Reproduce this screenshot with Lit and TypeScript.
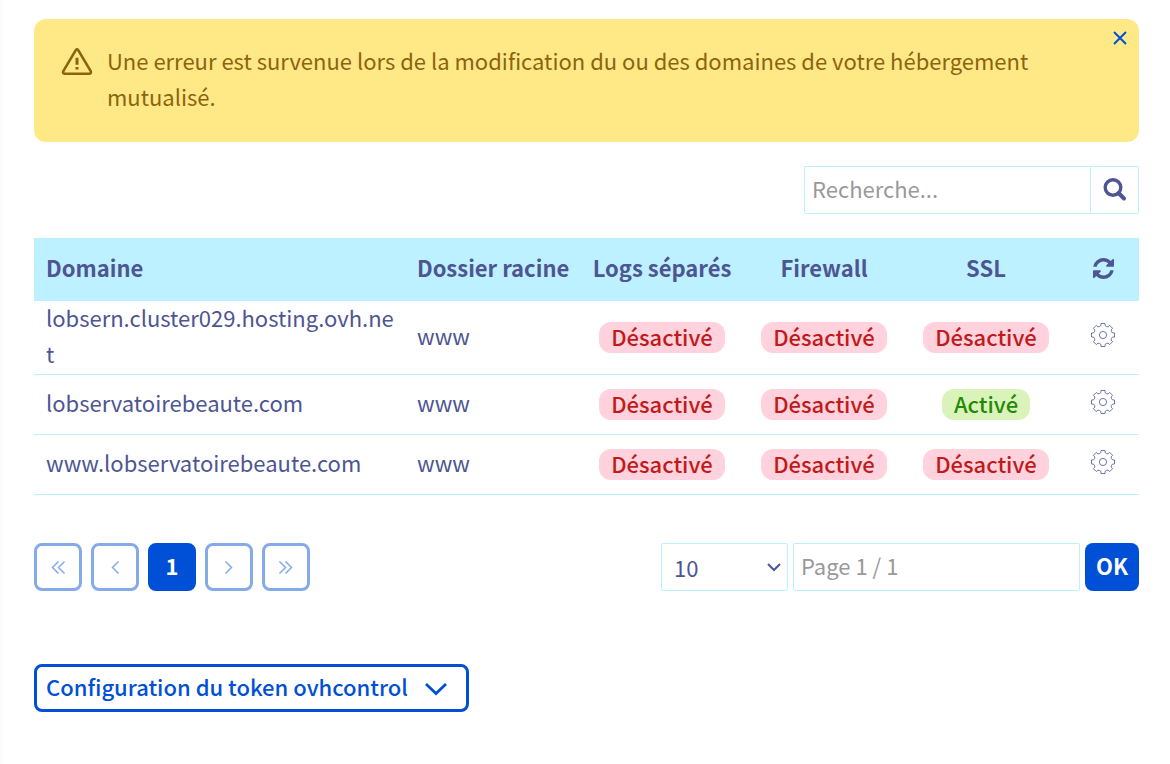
import { LitElement, html, css, svg } from "lit";
import { customElement, state } from "lit/decorators.js";

interface Domain {
  name: string;
  root: string;
  flags: boolean[];
}

const DOMAINS: Domain[] = [
  { name: "lobsern.cluster029.hosting.ovh.net", root: "www", flags: [false, false, false] },
  { name: "lobservatoirebeaute.com", root: "www", flags: [false, false, true] },
  { name: "www.lobservatoirebeaute.com", root: "www", flags: [false, false, false] },
];

/* Outline of an eight-toothed gear on a 26px canvas. */
const gearPath = (() => {
  const teeth = 8;
  const point = (radius: number, degrees: number) => {
    const a = (degrees * Math.PI) / 180;
    return `${(13 + radius * Math.sin(a)).toFixed(2)} ${(13 - radius * Math.cos(a)).toFixed(2)}`;
  };
  let d = "";
  for (let i = 0; i < teeth; i++) {
    const c = (i * 360) / teeth;
    d += `${i ? "L" : "M"}${point(9.6, c - 13)}L${point(11.7, c - 10)}`;
    d += `L${point(11.7, c + 10)}L${point(9.6, c + 13)}`;
    d += `Q${point(8.8, c + 22.5)} ${point(9.6, c + 32)}`;
  }
  return d + "Z";
})();

const stroke = (size: number, width: number, d: string) => html`
  <svg width=${size} height=${size} viewBox="0 0 ${size} ${size}" fill="none"
    stroke="currentColor" stroke-width=${width} aria-hidden="true">${svg`<path d=${d} />`}</svg>`;

const gearIcon = html`
  <svg width="26" height="26" viewBox="0 0 26 26" fill="none" stroke="currentColor"
    stroke-width="0.8" stroke-linejoin="round" aria-hidden="true">
    <path d=${gearPath} /><circle cx="13" cy="13" r="3.6" />
  </svg>`;

const refreshIcon = html`
  <svg width="21" height="21" viewBox="0 0 1536 1536" fill="currentColor" aria-hidden="true">
    <path d="M1511 928q0 5-1 7-64 268-268 434.500T764 1536q-146 0-282.500-55T238 1324l-129 129q-19 19-45 19t-45-19-19-45V960q0-26 19-45t45-19h448q26 0 45 19t19 45-19 45l-137 137q71 66 161 102t187 36q134 0 250-65t186-179q11-17 53-117 8-23 30-23h192q13 0 22.500 9.500t9.500 22.500zm25-800v448q0 26-19 45t-45 19h-448q-26 0-45-19t-19-45 19-45l138-138Q969 256 768 256q-134 0-250 65T332 500q-11 17-53 117-8 23-30 23H50q-13 0-22.500-9.500T18 608v-7q65-268 270-434.500T768 0q146 0 284 55.500T1297 212l130-129q19-19 45-19t45 19 19 45z" />
  </svg>`;

@customElement("app-root")
export class AppRoot extends LitElement {
  @state() private alertOpen = true;

  static styles = css`
    :host {
      display: block;
      box-sizing: border-box;
      min-height: 100vh;
      padding: 19px 31px 24px 31px;
      border-left: 3px solid #fcfcfd;
      background: #fff;
      color: #4d5592;
      font: 400 22px/36px "Noto Sans CJK SC", "Noto Sans", sans-serif;
    }
    *, *::before, *::after { box-sizing: border-box; }
    svg { display: block; flex: none; }
    button, input, select { font: inherit; color: inherit; margin: 0; }
    button {
      display: flex;
      align-items: center;
      justify-content: center;
      padding: 0;
      border: 0;
      background: none;
      cursor: pointer;
    }
    /* The font sits low in its line box; trimming the top centres the letters. */
    .text { display: block; margin-top: -4px; }
    .alert {
      display: flex;
      align-items: flex-start;
      padding: 23px 12px 28px 27px;
      border-radius: 12px;
      background: #ffe987;
      color: #8d6310;
      position: relative;
    }
    .alert p { flex: 1; margin: 0 84px 0 14px; }
    .alert .warning { margin-top: 4px; }
    .close { position: absolute; top: 12px; right: 12px; color: #0050d7; }
    .search {
      display: flex;
      width: 335px;
      height: 48px;
      margin: 24px 0 24px auto;
    }
    .field {
      min-width: 0;
      height: 48px;
      padding: 0 7px 4px;
      border: 1px solid #bef1ff;
      border-radius: 2px;
      background: #fff;
      outline: 0;
    }
    .field::placeholder { color: #999; opacity: 1; }
    .search .field { flex: 1; border-right: 0; border-radius: 2px 0 0 2px; }
    .search button { width: 49px; border: 1px solid #bef1ff; border-radius: 0 2px 2px 0; }
    table { width: 100%; border-collapse: separate; border-spacing: 0; table-layout: fixed; }
    .root { width: 176px; }
    .flag { width: 162px; }
    .tools { width: 72px; }
    th {
      height: 63px;
      padding: 0 0 2px;
      background: #bef1ff;
      font-weight: 700;
      text-align: center;
      white-space: nowrap;
    }
    td {
      height: 60px;
      padding: 0 0 1px;
      border-bottom: 1px solid #bef1ff;
      text-align: center;
      overflow-wrap: anywhere;
    }
    tbody tr:first-child td { height: 74px; }
    .start { padding-left: 12px; padding-right: 8px; text-align: left; }
    td button, th button { margin: 0 auto; }
    td button { margin-bottom: 4px; }
    .badge {
      display: block;
      width: fit-content;
      height: 31px;
      margin: 0 auto;
      padding: 0 12px;
      border-radius: 12px;
      background: #ffd2dd;
      color: #bf1b1b;
      font-weight: 500;
      line-height: 29px;
    }
    .badge.on { background: #daf3bb; color: #228a05; }
    .bar {
      display: flex;
      flex-wrap: wrap;
      justify-content: space-between;
      gap: 12px;
      margin: 48px 0 73px;
    }
    .pages { display: flex; gap: 9px; }
    .pages button {
      width: 48px;
      height: 48px;
      border: 3px solid #85aaea;
      border-radius: 8px;
      color: #85aaea;
    }
    .pages .current { border-color: #0050d7; background: #0050d7; color: #fff; font-weight: 700; }
    .jump { display: flex; gap: 5px; }
    .size { display: grid; width: 127px; align-items: center; }
    .size > * { grid-area: 1 / 1; }
    .size select { width: 100%; padding: 0 12px; appearance: none; }
    .size svg { justify-self: end; margin-right: 6px; pointer-events: none; }
    .jump input { width: 287px; }
    .ok {
      width: 54px;
      height: 48px;
      border-radius: 8px;
      background: #0050d7;
      color: #fff;
      font-weight: 700;
    }
    .token {
      height: 48px;
      padding: 0 17px 0 9px;
      gap: 15px;
      border: 3px solid #0050d7;
      border-radius: 8px;
      color: #0050d7;
      font-weight: 500;
    }
  `;

  private renderRow(d: Domain) {
    return html`
      <tr>
        <td class="start"><span class="text">${d.name}</span></td>
        <td class="start"><span class="text">${d.root}</span></td>
        ${d.flags.map((on) => html`
          <td><span class="badge ${on ? "on" : ""}">${on ? "Activé" : "Désactivé"}</span></td>`)}
        <td><button aria-label="Actions pour ${d.name}">${gearIcon}</button></td>
      </tr>`;
  }

  render() {
    return html`
      ${this.alertOpen ? html`
        <div class="alert" role="alert">
          <svg class="warning" width="32" height="32" viewBox="0 0 32 32" fill="none"
            stroke="currentColor" stroke-linejoin="round" aria-hidden="true">
            <path d="M14.800 4.100Q16 2.300 17.200 4.100L29.700 25.200Q30.500 27.500 28.500 27.800H3.500Q1.500 27.500 2.300 25.200Z" stroke-width="2.600" />
            <path d="M16 11.800V18.800M16 21V23.600" stroke-width="3" />
          </svg>
          <p>Une erreur est survenue lors de la modification du ou des domaines de votre hébergement mutualisé.</p>
          <button class="close" aria-label="Fermer" @click=${() => (this.alertOpen = false)}>
            ${stroke(14, 2, "M1 1L13 13M13 1L1 13")}
          </button>
        </div>` : null}

      <form class="search" role="search" @submit=${(e: Event) => e.preventDefault()}>
        <input class="field" type="text" placeholder="Recherche..." aria-label="Recherche" />
        <button aria-label="Rechercher">
          <svg width="24" height="24" viewBox="0 0 24 24" fill="none" stroke="currentColor" aria-hidden="true">
            <circle cx="10" cy="9.500" r="7.800" stroke-width="3.400" />
            <path d="M15.500 15L21 20.500" stroke-width="4" stroke-linecap="round" />
          </svg>
        </button>
      </form>

      <table>
        <colgroup>
          <col /><col class="root" /><col class="flag" /><col class="flag" /><col class="flag" /><col class="tools" />
        </colgroup>
        <thead>
          <tr>
            <th class="start" scope="col"><span class="text">Domaine</span></th>
            <th class="start" scope="col"><span class="text">Dossier racine</span></th>
            <th scope="col"><span class="text">Logs séparés</span></th>
            <th scope="col"><span class="text">Firewall</span></th>
            <th scope="col"><span class="text">SSL</span></th>
            <th scope="col"><button aria-label="Rafraîchir">${refreshIcon}</button></th>
          </tr>
        </thead>
        <tbody>${DOMAINS.map((d) => this.renderRow(d))}</tbody>
      </table>

      <div class="bar">
        <nav class="pages" aria-label="Pagination">
          <button disabled aria-label="Première page">${stroke(16, 1.5, "M8.500 2.500L2.500 8.500L8.500 14.500M14.500 2.500L8.500 8.500L14.500 14.500")}</button>
          <button disabled aria-label="Page précédente">${stroke(16, 1.5, "M11.500 2.500L5.500 8.500L11.500 14.500")}</button>
          <button class="current" aria-current="page"><span class="text">1</span></button>
          <button disabled aria-label="Page suivante">${stroke(16, 1.5, "M4.500 2.500L10.500 8.500L4.500 14.500")}</button>
          <button disabled aria-label="Dernière page">${stroke(16, 1.5, "M1.500 2.500L7.500 8.500L1.500 14.500M7.500 2.500L13.500 8.500L7.500 14.500")}</button>
        </nav>
        <form class="jump" @submit=${(e: Event) => e.preventDefault()}>
          <div class="size">
            <select class="field" aria-label="Résultats par page">
              <option>10</option><option>25</option><option>50</option>
            </select>
            ${stroke(16, 2, "M2 5L8 11L14 5")}
          </div>
          <input class="field" type="text" placeholder="Page 1 / 1" aria-label="Numéro de page" />
          <button class="ok"><span class="text">OK</span></button>
        </form>
      </div>

      <button class="token" aria-expanded="false">
        <span class="text">Configuration du token ovhcontrol</span>
        ${stroke(26, 2.8, "M3 9L13 18.500L23 9")}
      </button>
    `;
  }
}
